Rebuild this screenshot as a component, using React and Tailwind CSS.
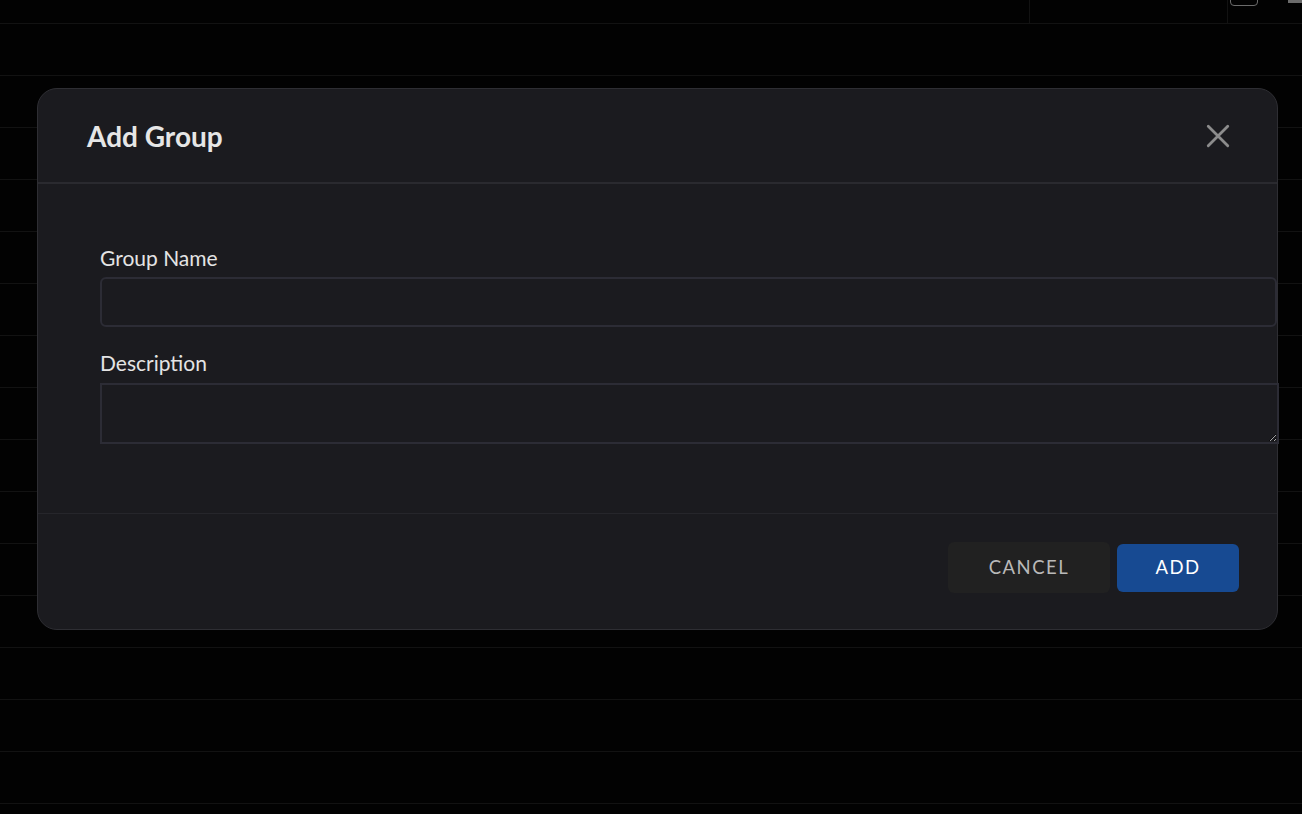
import React from "react";

const rows = Array.from({ length: 15 });

function AddGroupModal() {
  return (
    <div className="absolute left-[37px] top-[88px] w-[1241px] rounded-[20px] border border-[#2e2e33] bg-[#1b1b1f] font-['Lato',sans-serif]">
      {/* Header */}
      <div className="flex h-[95px] items-center justify-between border-b-2 border-[#2a2a2f] pl-[49px] pr-[46px]">
        <h2 className="text-[28px] font-bold text-[#e6e6e6]">Add Group</h2>
        <button className="text-[#8c8c8c]">
          <svg width="26" height="26" viewBox="0 0 24 24" fill="none" stroke="currentColor" strokeWidth="2.6" strokeLinecap="round">
            <path d="M3 3L21 21M21 3L3 21" />
          </svg>
        </button>
      </div>

      {/* Body */}
      <div className="pl-[62px] pt-[60px] pb-[69px]">
        <label className="block text-[21px] leading-[28px] text-[#e4e4e4]">Group Name</label>
        <input className="mt-[5px] block h-[50px] w-[1177px] rounded-md border-2 border-[#2c2c35] bg-[#1b1b1f] px-3 text-[#e4e4e4] outline-none" />
        <label className="mt-[22px] block text-[21px] leading-[28px] text-[#e4e4e4]">Description</label>
        <textarea className="mt-[6px] block h-[61px] w-[1179px] border-2 border-[#2c2c35] bg-[#1b1b1f] px-3 text-[#e4e4e4] outline-none" />
      </div>

      {/* Footer */}
      <div className="flex h-[116px] items-start justify-end gap-[7px] border-t border-[#26262b] pr-[38px] pt-[28px]">
        <button className="h-[51px] w-[162px] rounded-md bg-[#212121] text-[18.5px] tracking-[1.5px] text-[#b9b9b9]">CANCEL</button>
        <button className="mt-[2px] h-[48px] w-[122px] rounded-md bg-[#174a92] text-[18.5px] tracking-[1.5px] text-white">ADD</button>
      </div>
    </div>
  );
}

export default function App() {
  return (
    <div className="relative h-[814px] w-[1302px] overflow-hidden bg-[#020202]">
      {/* Table behind the modal */}
      <div className="flex h-[24px] border-b border-[#121212]">
        <div className="w-[1030px] border-r border-[#121212]" />
        <div className="w-[198px] border-r border-[#121212]" />
        <div className="flex flex-1 justify-center">
          <div className="-mt-[8px] ml-[2px] h-[14px] w-[28px] rounded-[4px] border border-[#6b6b6b]" />
          <div className="ml-auto h-[3px] w-[14px] bg-[#6b6b6b]" />
        </div>
      </div>
      {rows.map((_, i) => (
        <div key={i} className="h-[52px] border-b border-[#121212]" />
      ))}

      <AddGroupModal />
    </div>
  );
}
